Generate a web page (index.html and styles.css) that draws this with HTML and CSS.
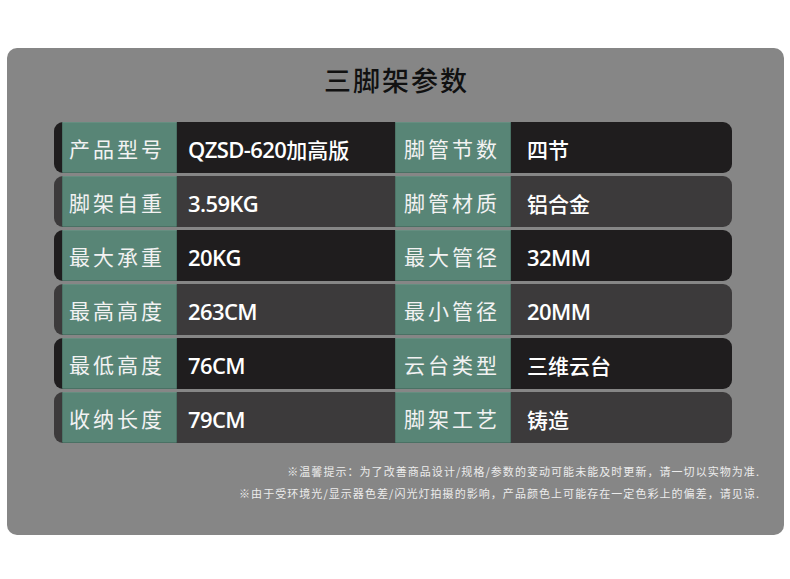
FILE: index.html
```html
<!DOCTYPE html>
<html lang="zh">
<head>
<meta charset="utf-8">
<link rel="stylesheet" href="styles.css">
</head>
<body>
<div class="panel">
  <h1 class="title">三脚架参数</h1>
  <div class="table">
    <div class="row dark">
      <div class="label">产品型号</div><div class="value v1">QZSD-620<span class="cjk">加高版</span></div>
      <div class="label">脚管节数</div><div class="value v2"><span class="cjk">四节</span></div>
    </div>
    <div class="row gray">
      <div class="label">脚架自重</div><div class="value v1">3.59KG</div>
      <div class="label">脚管材质</div><div class="value v2"><span class="cjk">铝合金</span></div>
    </div>
    <div class="row dark">
      <div class="label">最大承重</div><div class="value v1">20KG</div>
      <div class="label">最大管径</div><div class="value v2">32MM</div>
    </div>
    <div class="row gray">
      <div class="label">最高高度</div><div class="value v1">263CM</div>
      <div class="label">最小管径</div><div class="value v2">20MM</div>
    </div>
    <div class="row dark">
      <div class="label">最低高度</div><div class="value v1">76CM</div>
      <div class="label">云台类型</div><div class="value v2"><span class="cjk">三维云台</span></div>
    </div>
    <div class="row gray">
      <div class="label">收纳长度</div><div class="value v1">79CM</div>
      <div class="label">脚架工艺</div><div class="value v2"><span class="cjk">铸造</span></div>
    </div>
  </div>
  <div class="notes">
    <p>※温馨提示：为了改善商品设计/规格/参数的变动可能未能及时更新，请一切以实物为准.</p>
    <p>※由于受环境光/显示器色差/闪光灯拍摄的影响，产品颜色上可能存在一定色彩上的偏差，请见谅.</p>
  </div>
</div>
</body>
</html>
```
FILE: styles.css
```css
html, body {
  margin: 0;
  padding: 0;
  background: #ffffff;
}
body {
  width: 790px;
  height: 579px;
  padding-top: 48px;
  box-sizing: border-box;
  font-family: "Noto Sans CJK SC", "Noto Sans", sans-serif;
}
.panel {
  margin-left: 7px;
  width: 777px;
  height: 487px;
  background: #868686;
  border-radius: 10px;
  padding-top: 16px;
  box-sizing: border-box;
}
.title {
  margin: 0;
  text-align: center;
  font-size: 27px;
  line-height: 32px;
  font-weight: 500;
  color: #111111;
  letter-spacing: 2px;
  padding-left: 2px;
}
.table {
  margin-top: 26px;
  margin-left: 47px;
  display: flex;
  flex-direction: column;
  gap: 3px;
}
.row {
  display: flex;
  width: 678px;
  height: 51px;
  border-radius: 9px;
  padding-left: 8px;
  box-sizing: border-box;
  overflow: hidden;
}
.row.dark { background: #1f1d1e; }
.row.gray { background: #3c3a3b; }
.label {
  width: 115px;
  flex: none;
  background: #588576;
  box-shadow: inset 0 1px 0 rgba(255,255,255,0.08), inset 1px 0 0 rgba(0,0,0,0.12), inset -1px 0 0 rgba(0,0,0,0.15), inset 0 -1px 0 rgba(0,0,0,0.15);
  color: #f2f2f2;
  font-size: 21px;
  letter-spacing: 3px;
  padding-left: 7px;
  box-sizing: border-box;
  display: flex;
  align-items: center;
  padding-top: 1px;
}
.label + .value + .label {
  width: 116px;
  padding-left: 9px;
}
.value {
  flex: none;
  color: #ffffff;
  font-family: "Open Sans", "Noto Sans CJK SC", sans-serif;
  font-weight: 600;
  font-size: 22px;
  letter-spacing: -0.6px;
  display: flex;
  align-items: center;
  box-sizing: border-box;
  padding-top: 3px;
}
.cjk {
  font-family: "Noto Sans CJK SC", sans-serif;
  font-weight: 500;
  letter-spacing: 0;
  font-size: 21px;
}
.v1 {
  width: 218px;
  padding-left: 11px;
}
.v2 {
  width: 221px;
  padding-left: 16px;
  border-radius: 0 9px 9px 0;
}
.notes {
  margin-top: 17px;
  padding-right: 24px;
  text-align: right;
  color: #ececec;
  font-size: 11px;
  letter-spacing: 1.05px;
}
.notes p {
  margin: 0;
  line-height: 22px;
}
```
